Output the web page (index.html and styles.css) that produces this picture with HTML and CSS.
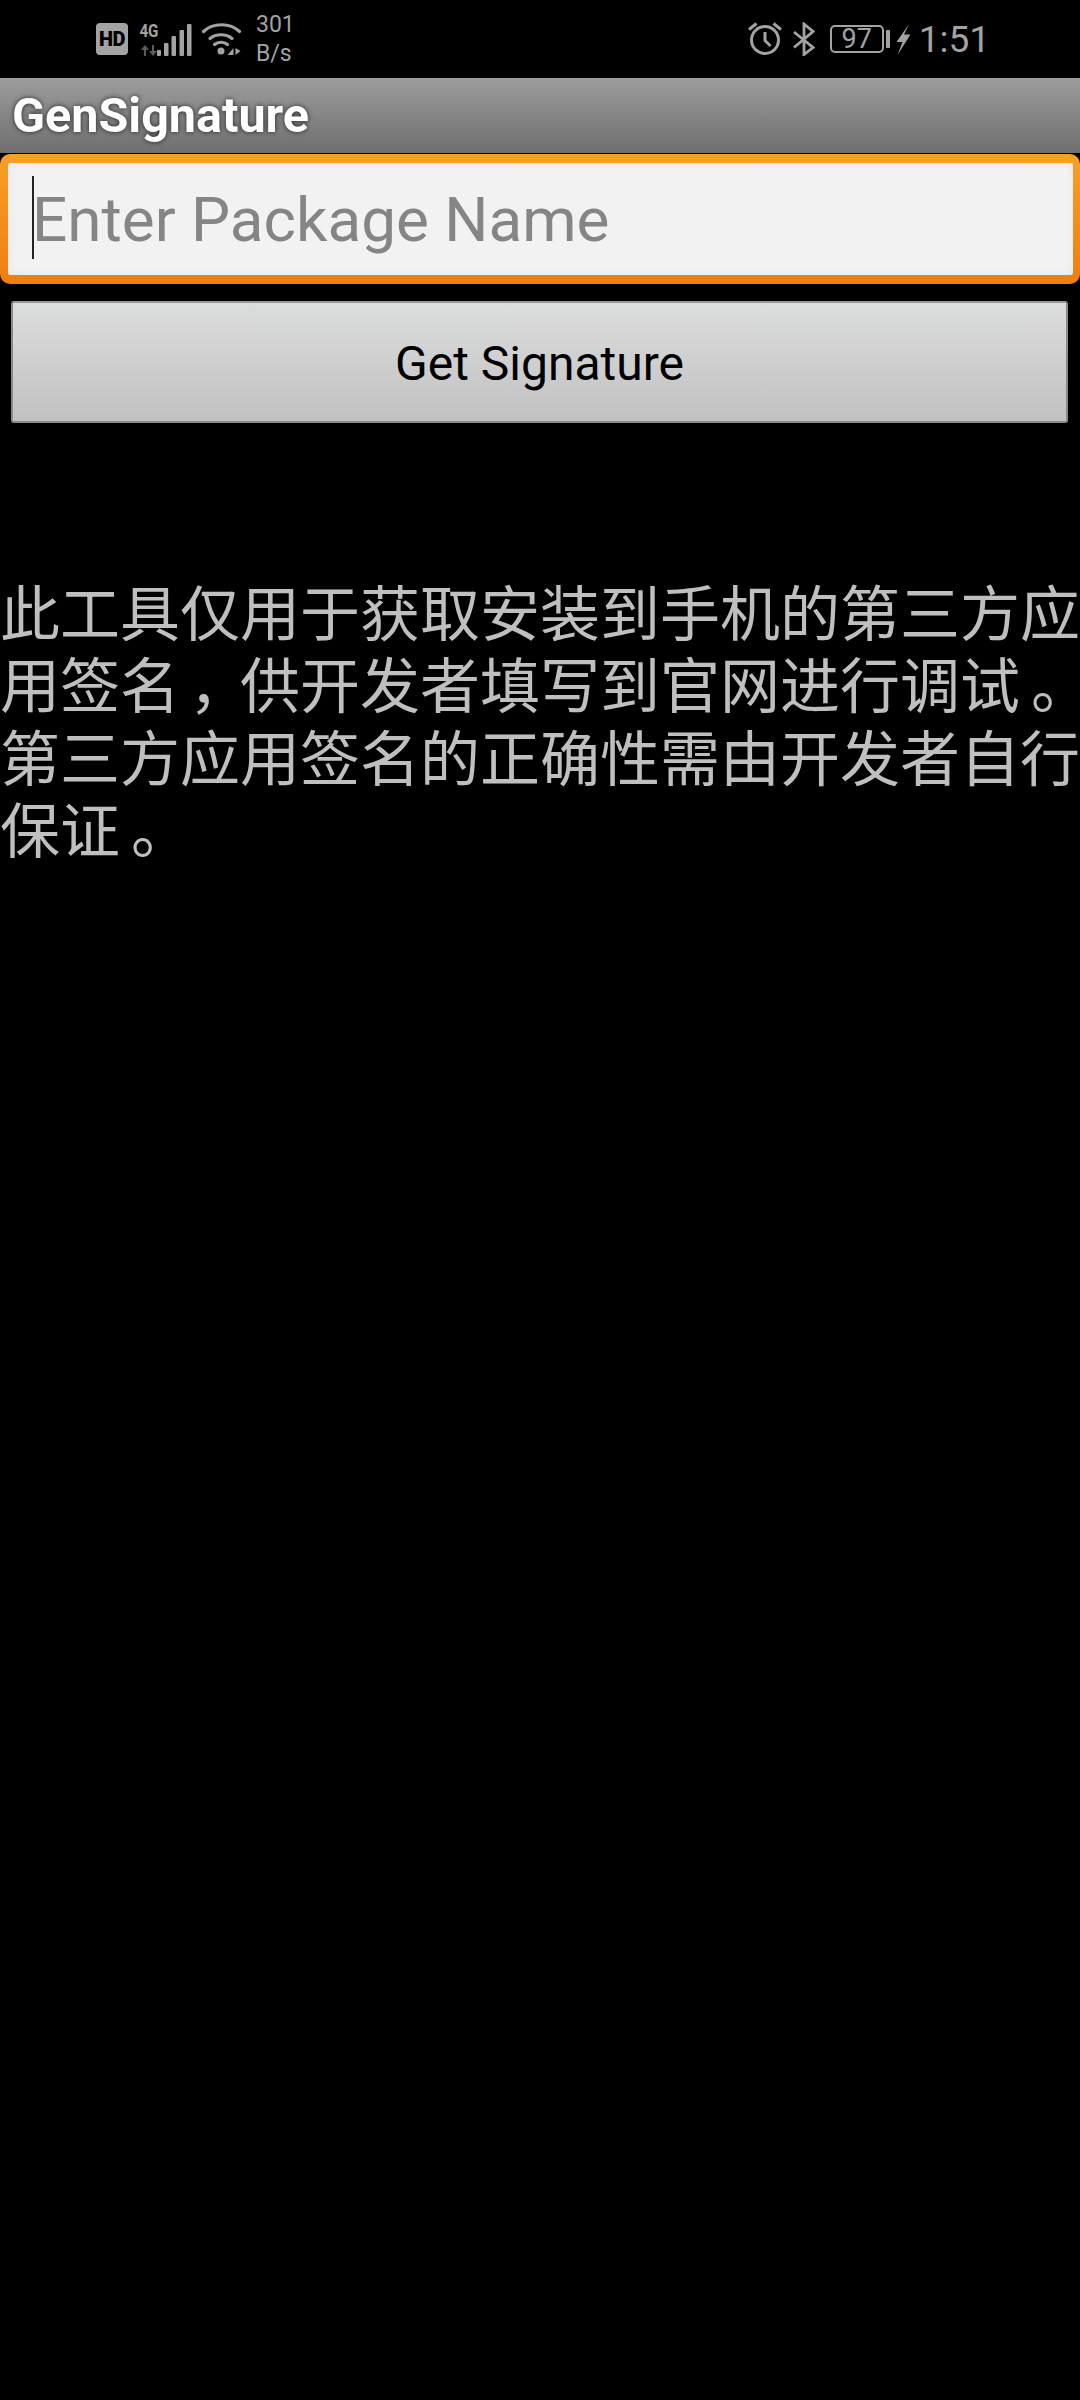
FILE: index.html
```html
<!DOCTYPE html>
<html lang="zh">
<head>
<meta charset="utf-8">
<title>GenSignature</title>
<link rel="stylesheet" href="styles.css">
</head>
<body>
<header class="status">
  <div class="status-left">
    <span class="hd">HD</span>
    <div class="net">
      <span class="net-type">4G</span>
      <svg class="net-arrows" viewBox="0 0 18 11" width="18" height="11"><path d="M5 0L1 5h3v6h2V5h3zM13 11l4-5h-3V0h-2v6H9z" fill="#5c5c5c"/></svg>
    </div>
    <svg class="signal" viewBox="0 0 35 33" width="35" height="33"><g fill="#a3a3a3"><rect x="0" y="27" width="4" height="6" rx="1"/><rect x="7" y="20" width="4.500" height="13" rx="1"/><rect x="14.500" y="13" width="4.500" height="20" rx="1"/><rect x="22.500" y="7" width="4.500" height="26" rx="1"/><rect x="30" y="1" width="4.500" height="32" rx="1"/></g></svg>
    <svg class="wifi" viewBox="0 0 40 34" width="40" height="34"><g fill="none" stroke="#a3a3a3" stroke-width="3.200" stroke-linecap="round"><path d="M1.500 9.500C11 .5 28 .5 37.500 9.500"/><path d="M8 16.500c6-5 16-5 22 0"/><path d="M12.500 22.500c3.500-3 9.500-3 13 0"/></g><circle cx="19" cy="29" r="3.500" fill="#a3a3a3"/><path d="M31.500 26v7h-6zM33.500 26v7l5-4z" fill="#a3a3a3"/></svg>
    <div class="speed"><span>301</span><span>B/s</span></div>
  </div>
  <div class="status-right">
    <svg class="alarm" viewBox="0 0 34 34" width="34" height="34"><g fill="none" stroke="#a3a3a3" stroke-width="3"><circle cx="17" cy="18" r="13.500"/><path d="M17 10v8.500l5.500 5.500M1 7.500l7.500-6M33 7.500l-7.500-6"/></g></svg>
    <svg class="bt" viewBox="0 0 22 34" width="22" height="34"><path d="M1 10l19 15.500L11 32.500V2l9 7.500L1 25.500" fill="none" stroke="#a3a3a3" stroke-width="2.800"/></svg>
    <div class="battery"><span class="battery-level">97</span></div>
    <span class="battery-nub"></span>
    <svg class="bolt" viewBox="0 0 15 31" width="15" height="31"><path d="M13 0L.5 18h6L1.500 31 14.500 10.500H8z" fill="#a3a3a3"/></svg>
    <span class="clock">1:51</span>
  </div>
</header>
<div class="titlebar">GenSignature</div>
<main>
  <div class="field">
    <div class="field-inner"><span class="caret"></span><span class="placeholder">Enter Package Name</span></div>
  </div>
  <div class="button-wrap"><div class="button">Get Signature</div></div>
  <p class="notice">此工具仅用于获取安装到手机的第三方应用签名<span class="punct comma">，</span>供开发者填写到官网进行调试<span class="punct">。</span>第三方应用签名的正确性需由开发者自行保证<span class="punct">。</span></p>
</main>
</body>
</html>
```
FILE: styles.css
```css
* { box-sizing: border-box; }
html, body { margin: 0; padding: 0; background: #000; }
body { width: 1080px; height: 2400px; font-family: Roboto, "Noto Sans CJK SC", sans-serif; overflow: hidden; }

.status { height: 78px; display: flex; justify-content: space-between; align-items: center; padding: 0 90px 0 96px; color: #a3a3a3; }
.status-left, .status-right { display: flex; align-items: center; }
.hd { width: 32px; height: 32px; border-radius: 4px; background: #a3a3a3; color: #000; font-weight: 900; font-size: 20px; line-height: 32px; text-align: center; letter-spacing: -0.5px; }
.net { width: 22px; margin-left: 10px; display: flex; flex-direction: column; align-items: center; gap: 7px; }
.net-type { font: 700 19px/15px Roboto, sans-serif; transform: scaleX(0.8); white-space: nowrap; }
.net-arrows { display: block; }
.signal { margin-left: -3px; }
.wifi { margin-left: 10px; }
.speed { display: flex; flex-direction: column; margin-left: 14px; font-size: 23px; line-height: 29px; }

.bt { margin-left: 11px; }
.battery { width: 54px; height: 28px; margin-left: 15px; border: 2px solid #a3a3a3; border-radius: 5px; display: flex; align-items: center; justify-content: center; font-size: 27px; }
.battery-level { line-height: 24px; }
.battery-nub { width: 4px; height: 18px; margin-left: 2px; background: #a3a3a3; border-radius: 1px; }
.bolt { margin-left: 6px; }
.clock { margin-left: 8px; margin-top: 2px; font-size: 37px; line-height: 40px; }

.titlebar { height: 75px; margin-bottom: 1px; padding: 0 0 0 12px; background: linear-gradient(#9c9c9c, #6f6f6f); color: #fff; font-weight: 700; font-size: 48.500px; line-height: 75px; text-shadow: 0 0 5px rgba(0,0,0,.75); }

.field { height: 130px; padding: 9px 7px 9px 8px; border-radius: 10px; background: linear-gradient(#f99f28, #ee7f10); }
.field-inner { height: 100%; padding-left: 24px; background: #f2f2f2; box-shadow: inset 0 0 10px rgba(0,0,0,.05); display: flex; align-items: center; position: relative; border-radius: 2px; }
.caret { position: absolute; left: 24px; top: 13px; width: 2px; height: 83px; background: #222; }
.placeholder { padding-top: 2px; font-size: 62px; color: #858585; line-height: 70px; }

.button-wrap { padding: 17px 12px 0 11px; }
.button { height: 122px; border: 2px solid #8a8a8a; border-top-color: #999; border-radius: 3px; padding-top: 4px; background: linear-gradient(#dcdddd, #c1c1c1); color: #000; font-size: 48px; line-height: 114px; text-align: center; }

.notice { margin: 151px 0 0; font-family: "Noto Sans CJK SC", sans-serif; font-size: 60px; line-height: 72.300px; color: #bfbfbf; }
.punct { display: inline-block; width: 60px; text-indent: 11px; font-feature-settings: "halt"; }
.comma { text-indent: 9px; }
```
